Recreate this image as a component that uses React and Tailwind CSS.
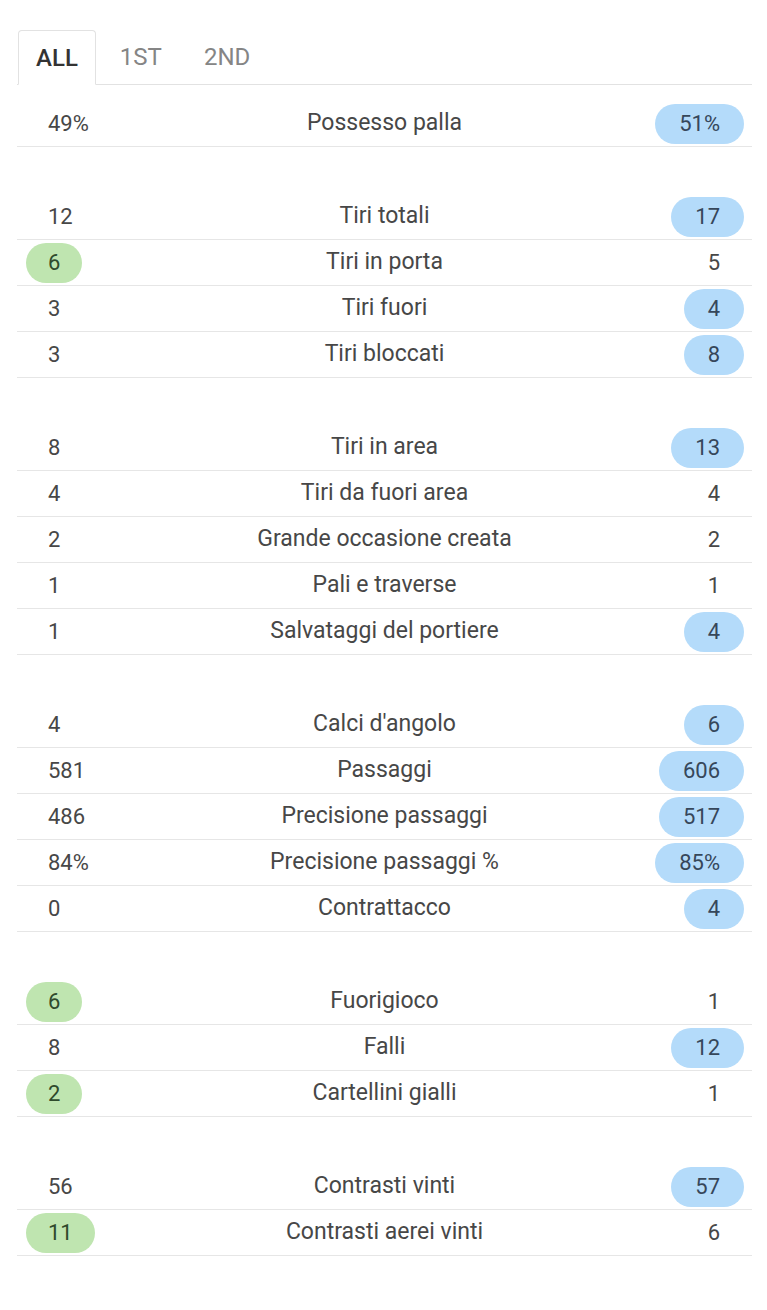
import React from "react";

const groups = [
  [["49%", "Possesso palla", "51%", "r"]],
  [
    ["12", "Tiri totali", "17", "r"],
    ["6", "Tiri in porta", "5", "l"],
    ["3", "Tiri fuori", "4", "r"],
    ["3", "Tiri bloccati", "8", "r"],
  ],
  [
    ["8", "Tiri in area", "13", "r"],
    ["4", "Tiri da fuori area", "4", ""],
    ["2", "Grande occasione creata", "2", ""],
    ["1", "Pali e traverse", "1", ""],
    ["1", "Salvataggi del portiere", "4", "r"],
  ],
  [
    ["4", "Calci d'angolo", "6", "r"],
    ["581", "Passaggi", "606", "r"],
    ["486", "Precisione passaggi", "517", "r"],
    ["84%", "Precisione passaggi %", "85%", "r"],
    ["0", "Contrattacco", "4", "r"],
  ],
  [
    ["6", "Fuorigioco", "1", "l"],
    ["8", "Falli", "12", "r"],
    ["2", "Cartellini gialli", "1", "l"],
  ],
  [
    ["56", "Contrasti vinti", "57", "r"],
    ["11", "Contrasti aerei vinti", "6", "l"],
  ],
];

function Row({ row }) {
  const [l, label, r, hi] = row;
  return (
    <div className="h-[46px] border-b border-[#e6e6e6] flex items-center">
      <div className="w-[200px] flex items-center pl-[9px]">
        <span
          className={
            "h-[40px] flex items-center px-[22px] rounded-full " +
            (hi === "l" ? "bg-[#bfe5b0] text-[#2f4a2c]" : "text-[#474747]")
          }
        >
          {l}
        </span>
      </div>
      <div className="flex-1 text-center text-[23px] text-[#474747]">{label}</div>
      <div className="w-[200px] flex items-center justify-end pr-[8px]">
        <span
          className={
            "h-[40px] flex items-center px-[24px] rounded-full " +
            (hi === "r" ? "bg-[#b4dbfa] text-[#36475a]" : "text-[#474747]")
          }
        >
          {r}
        </span>
      </div>
    </div>
  );
}

export default function App() {
  return (
    <div
      className="w-[767px] min-h-[1310px] bg-white pt-[30px]"
      style={{ fontFamily: "Roboto, 'Noto Sans', sans-serif" }}
    >
      <div className="ml-[17px] w-[735px] text-[22px]">
        <div className="flex h-[55px] border-b border-[#e2e2e2] items-end text-[24px]">
          <div className="h-[55px] -mb-px bg-white border border-[#e2e2e2] border-b-white rounded-t-[4px] px-[17px] flex items-center font-medium text-[#333333] ml-px">
            ALL
          </div>
          <div className="h-[54px] flex items-center ml-[24px] text-[#858585]">1ST</div>
          <div className="h-[54px] flex items-center ml-[42px] text-[#858585]">2ND</div>
        </div>
        {groups.map((g, gi) => (
          <div key={gi} className={gi === 0 ? "mt-[16px]" : "mt-[47px]"}>
            {g.map((row, ri) => (
              <Row key={ri} row={row} />
            ))}
          </div>
        ))}
      </div>
    </div>
  );
}
